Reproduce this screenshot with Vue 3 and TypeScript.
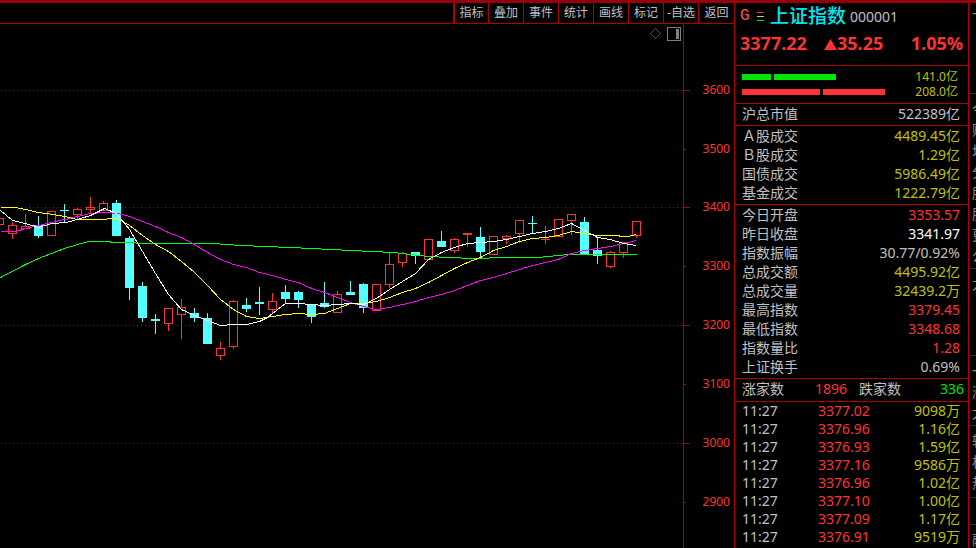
<script setup lang="ts">
type Tone = 'plain' | 'white' | 'red' | 'yellow' | 'green'

interface Stat {
  label: string
  value: string
  tone: Tone
}

interface Candle {
  x: number
  up: boolean
  high: number
  top: number
  bottom: number
  low: number
}

const tools: string[] = ['指标', '叠加', '事件', '统计', '画线', '标记', '-自选', '返回']

const axis = [
  { price: 3600, y: 90, major: true },
  { price: 3500, y: 149, major: false },
  { price: 3400, y: 207, major: true },
  { price: 3300, y: 266, major: false },
  { price: 3200, y: 325, major: true },
  { price: 3100, y: 384, major: false },
  { price: 3000, y: 443, major: true },
  { price: 2900, y: 502, major: false },
]
const gridLines = axis.filter((a) => a.major)

// direction (1 = close above open), high, body top, body bottom, low
const bars: number[][] = [
  [1, 218, 218, 225, 225],
  [1, 222, 225, 234, 239],
  [1, 214, 226, 229, 229],
  [0, 216, 225, 236, 238],
  [1, 211, 211, 236, 236],
  [0, 204, 210, 211, 222],
  [1, 208, 209, 215, 219],
  [1, 197, 207, 210, 214],
  [1, 201, 203, 211, 211],
  [0, 200, 203, 236, 236],
  [0, 236, 238, 288, 300],
  [0, 282, 286, 318, 322],
  [0, 314, 319, 321, 334],
  [1, 308, 308, 324, 331],
  [1, 299, 307, 315, 339],
  [0, 308, 313, 318, 322],
  [0, 313, 318, 344, 344],
  [1, 342, 348, 356, 360],
  [1, 300, 301, 347, 349],
  [0, 298, 305, 309, 312],
  [0, 287, 302, 304, 315],
  [1, 293, 301, 310, 314],
  [0, 285, 292, 299, 303],
  [0, 291, 292, 300, 308],
  [0, 304, 304, 317, 323],
  [0, 282, 303, 307, 308],
  [1, 291, 294, 313, 313],
  [0, 281, 292, 295, 295],
  [0, 283, 284, 308, 313],
  [1, 284, 284, 311, 311],
  [1, 253, 264, 285, 288],
  [1, 252, 253, 263, 267],
  [0, 252, 252, 256, 264],
  [1, 239, 239, 260, 260],
  [0, 231, 241, 247, 247],
  [1, 238, 239, 251, 253],
  [1, 233, 233, 235, 247],
  [0, 227, 237, 252, 258],
  [1, 236, 236, 255, 255],
  [1, 235, 236, 239, 244],
  [1, 220, 220, 234, 243],
  [0, 216, 223, 224, 233],
  [1, 226, 239, 240, 244],
  [1, 219, 219, 237, 237],
  [1, 214, 214, 221, 235],
  [0, 217, 222, 254, 254],
  [0, 237, 250, 256, 264],
  [1, 251, 252, 267, 268],
  [1, 242, 242, 253, 258],
  [1, 221, 221, 236, 238],
]
const candles: Candle[] = bars.map(([dir, high, top, bottom, low], i) => ({
  x: i * 13 - 1,
  up: dir === 1,
  high,
  top,
  bottom,
  low,
}))

const averages = [
  {
    name: 'ma60',
    points:
      '0,277 25,264 38,258 51,253 64,248 77,244 88,241 108,241 112,242 133,242 138,243 213,243 240,245 290,247 330,249 393,252 410,254 428,256 448,257 473,258 487,258 490,257 538,257 567,254 636,254',
  },
  {
    name: 'ma20',
    points:
      '0,231 15,231 25,228 38,225 51,222 64,219 77,216 90,213 104,212 118,213 129,216 142,221 155,226 168,232 181,237 194,244 207,252 220,259 233,264 246,267 259,272 272,275 285,279 298,282 311,288 324,292 337,297 350,302 363,306 376,309 389,307 402,304 415,301 428,297 441,294 454,290 467,285 480,280 493,277 506,273 519,269 532,265 545,262 558,259 571,253 584,250 597,248 610,246 623,243 636,240',
  },
  {
    name: 'ma10',
    points:
      '0,207 15,207 25,209 38,212 53,214 64,216 77,219 97,219 117,218 129,225 142,235 155,244 168,251 181,261 194,272 207,285 220,299 233,309 246,316 259,318 272,316 285,314 298,313 311,314 324,313 337,308 350,303 363,303 376,301 389,297 402,292 415,288 428,282 441,275 454,268 467,262 480,257 493,250 506,246 519,241 532,238 545,237 558,235 571,231 584,233 597,235 617,235 621,236 627,236 636,234',
  },
  {
    name: 'ma5',
    points:
      '0,210 12,220 25,223 38,227 51,223 66,222 80,218 90,215 104,208 116,213 129,229 142,251 155,273 168,294 181,309 194,315 207,320 220,325 233,324 246,324 259,321 267,317 272,313 285,303 298,303 311,304 324,305 337,304 350,303 363,304 376,298 389,289 402,281 415,273 428,259 441,252 454,247 467,243 480,242 493,241 506,239 519,236 532,233 545,231 558,228 571,223 584,230 597,237 610,239 623,243 636,245',
  },
]

const flows = [
  { side: 'buy', parts: [29, 62], amount: '141.0亿' },
  { side: 'sell', parts: [78, 62], amount: '208.0亿' },
]

const groups: Stat[][] = [
  [{ label: '沪总市值', value: '522389亿', tone: 'plain' }],
  [
    { label: 'Ａ股成交', value: '4489.45亿', tone: 'yellow' },
    { label: 'Ｂ股成交', value: '1.29亿', tone: 'yellow' },
    { label: '国债成交', value: '5986.49亿', tone: 'yellow' },
    { label: '基金成交', value: '1222.79亿', tone: 'yellow' },
  ],
  [
    { label: '今日开盘', value: '3353.57', tone: 'red' },
    { label: '昨日收盘', value: '3341.97', tone: 'white' },
    { label: '指数振幅', value: '30.77/0.92%', tone: 'plain' },
    { label: '总成交额', value: '4495.92亿', tone: 'yellow' },
    { label: '总成交量', value: '32439.2万', tone: 'yellow' },
    { label: '最高指数', value: '3379.45', tone: 'red' },
    { label: '最低指数', value: '3348.68', tone: 'red' },
    { label: '指数量比', value: '1.28', tone: 'red' },
    { label: '上证换手', value: '0.69%', tone: 'plain' },
  ],
]

const ticks: [string, string, string][] = [
  ['11:27', '3377.02', '9098万'],
  ['11:27', '3376.96', '1.16亿'],
  ['11:27', '3376.93', '1.59亿'],
  ['11:27', '3377.16', '9586万'],
  ['11:27', '3376.96', '1.02亿'],
  ['11:27', '3377.10', '1.00亿'],
  ['11:27', '3377.09', '1.17亿'],
  ['11:27', '3376.91', '9519万'],
]

const sideGroups: { name: string; rows: string[] }[] = [
  { name: 'first', rows: ['一'] },
  { name: 'main', rows: ['今', '财', '均', '分', '股', '股', '更', '公'] },
  { name: 'wide', rows: ['大'] },
  { name: 'news', rows: ['一', '涨', '大'] },
  { name: 'hot', rows: ['较', '板', '热'] },
  { name: 'gap', rows: [] },
  { name: 'last', rows: ['融'] },
]
</script>

<template>
  <div class="terminal">
    <main class="chart-area">
      <nav class="toolbar">
        <button v-for="tool in tools" :key="tool" type="button">{{ tool }}</button>
      </nav>
      <svg class="chart" viewBox="0 24 734 524" preserveAspectRatio="xMaxYMin meet">
        <g class="grid">
          <line v-for="g in gridLines" :key="g.price" x1="1" :y1="g.y + 0.5" x2="683" :y2="g.y + 0.5" />
        </g>
        <g shape-rendering="crispEdges">
          <g v-for="c in candles" :key="c.x" :class="c.up ? 'up' : 'down'">
            <template v-if="c.up">
              <rect v-if="c.top > c.high" class="solid" :x="c.x" :y="c.high" width="1" :height="c.top - c.high" />
              <rect v-if="c.low > c.bottom" class="solid" :x="c.x" :y="c.bottom" width="1" :height="c.low - c.bottom" />
              <rect v-if="c.bottom - c.top < 3" class="solid" :x="c.x - 4" :y="c.top" width="9" :height="c.bottom - c.top" />
              <rect v-else class="hollow" :x="c.x - 3.5" :y="c.top + 0.5" width="8" :height="c.bottom - c.top - 1" />
            </template>
            <template v-else>
              <rect class="solid" :x="c.x" :y="c.high" width="1" :height="c.low - c.high" />
              <rect class="solid" :x="c.x - 4" :y="c.top" width="9" :height="c.bottom - c.top" />
            </template>
          </g>
        </g>
        <g class="averages" shape-rendering="crispEdges" transform="translate(0.5 0.5)">
          <polyline v-for="m in averages" :key="m.name" :class="m.name" :points="m.points" />
        </g>
        <g class="axis">
          <line x1="683.5" y1="24" x2="683.5" y2="548" />
          <g v-for="a in axis" :key="a.price">
            <line x1="684" :y1="a.y + 0.5" :x2="a.major ? 689 : 686" :y2="a.y + 0.5" />
            <text x="730" :y="a.y + 4" text-anchor="end">{{ a.price }}</text>
          </g>
        </g>
        <g class="marks">
          <path d="M655.5 28.5l5 5-5 5-5-5z" stroke-dasharray="1 0.4" />
          <rect x="667.5" y="27.5" width="13" height="13" />
          <rect class="filled" x="676" y="29" width="3" height="10" />
        </g>
      </svg>
    </main>

    <aside class="quote">
      <header class="head">
        <div class="name-line">
          <span class="flag">G</span>
          <svg class="list-icon" viewBox="0 0 7 9" shape-rendering="crispEdges">
            <path d="M0 .5h7" stroke="#ff3232" />
            <path d="M0 4.5h7" stroke="#c0c0c0" />
            <path d="M0 8.5h7" stroke="#00e600" />
          </svg>
          <h1>上证指数</h1>
          <span class="code">000001</span>
        </div>
        <div class="price-line">
          <span>3377.22</span>
          <span class="change">
            <svg viewBox="0 0 13 11"><path d="M6.5 0L13 11H0z" fill="#ff3232" /></svg>35.25</span>
          <span class="percent">1.05%</span>
        </div>
      </header>

      <section class="flows">
        <div v-for="f in flows" :key="f.side" class="flow" :class="f.side">
          <i v-for="(w, i) in f.parts" :key="i" :style="{ width: w + 'px' }"></i>
          <span>{{ f.amount }}</span>
        </div>
      </section>

      <dl v-for="(group, i) in groups" :key="i" class="stats">
        <div v-for="s in group" :key="s.label">
          <dt>{{ s.label }}</dt>
          <dd :class="s.tone">{{ s.value }}</dd>
        </div>
      </dl>

      <section class="breadth">
        <p><span>涨家数</span><span class="red">1896</span></p>
        <p><span>跌家数</span><span class="green">336</span></p>
      </section>

      <table class="ticks">
        <tbody>
          <tr v-for="(t, i) in ticks" :key="i">
            <td>{{ t[0] }}</td>
            <td class="red">{{ t[1] }}</td>
            <td class="yellow">{{ t[2] }}</td>
          </tr>
        </tbody>
      </table>
    </aside>

    <aside class="side">
      <ul v-for="g in sideGroups" :key="g.name" :class="g.name">
        <li v-for="(r, i) in g.rows" :key="i">{{ r }}</li>
      </ul>
    </aside>
  </div>
</template>

<style>
body {
  margin: 0;
  background: #000;
}
</style>

<style scoped>
.terminal {
  --line: #b00000;
  display: grid;
  grid-template-columns: minmax(0, 1fr) 235px 7px;
  box-sizing: border-box;
  min-height: 100vh;
  border-top: 3px solid #960008;
  background: #000;
  color: #c0c0c0;
  font: 14px/19px "Noto Sans", "Noto Sans CJK SC", sans-serif;
}

.chart-area {
  display: flex;
  flex-direction: column;
  min-width: 0;
}

.toolbar {
  display: flex;
  justify-content: flex-end;
  height: 20px;
  border-bottom: 1px solid var(--line);
}

.toolbar button {
  width: 35px;
  padding: 0;
  border: 0;
  border-left: 1px solid var(--line);
  background: none;
  color: #c0c0c0;
  font: 12px/18px "Noto Sans", "Noto Sans CJK SC", sans-serif;
  white-space: nowrap;
}

.toolbar button:first-child {
  border-left-width: 2px;
}

.toolbar button:last-child {
  width: 36px;
}

.chart {
  display: block;
  flex: 1 1 0;
  width: 100%;
  min-height: 0;
}

.grid line {
  stroke: #a01414;
  stroke-dasharray: 1 3;
}

.solid {
  stroke: none;
}

.up .solid {
  fill: #ff3232;
}

.down .solid {
  fill: #54ffff;
}

.hollow {
  fill: none;
  stroke: #ff3232;
}

.averages polyline {
  fill: none;
  stroke-width: 1;
}

.ma5 {
  stroke: #fff;
}

.ma10 {
  stroke: #ff0;
}

.ma20 {
  stroke: #f0f;
}

.ma60 {
  stroke: #0f0;
}

.axis line {
  stroke: var(--line);
}

.axis text {
  fill: #ff3232;
  font-size: 12px;
}

.marks path,
.marks rect {
  fill: none;
  stroke: #808080;
}

.marks .filled {
  fill: #808080;
  stroke: none;
}

.quote {
  border: solid var(--line);
  border-width: 0 1px;
}

.head {
  height: 62px;
  box-sizing: border-box;
  padding: 0 5px;
}

.name-line {
  display: flex;
  align-items: center;
  height: 26px;
}

.flag {
  width: 17px;
  color: #ff5050;
  font: 16px/19px "Liberation Mono", monospace;
}

.list-icon {
  width: 7px;
  height: 9px;
  margin-right: 6px;
}

h1 {
  margin: 0 4px 0 0;
  color: #00e6f0;
  font-size: 19px;
  font-weight: 500;
  line-height: 26px;
}

.price-line {
  display: grid;
  grid-template-columns: 84px 1fr auto;
  align-items: center;
  height: 28px;
  color: #ff3232;
  font-size: 18px;
  font-weight: 700;
}

.change svg {
  width: 13px;
  height: 11px;
}

.flows {
  padding: 3px 10px 4px 7px;
  border-top: 1px solid var(--line);
}

.flow {
  display: flex;
  align-items: center;
  gap: 3px;
  height: 15px;
  font-size: 12px;
  line-height: 15px;
}

.flow i {
  height: 6px;
}

.buy i {
  background: #00e600;
}

.sell i {
  background: #ff3232;
}

.flow span {
  margin-left: auto;
  color: #c0c000;
}

.stats {
  margin: 0;
  padding: 0 8px 2px 7px;
  border-top: 1px solid var(--line);
}

.stats div {
  display: flex;
  justify-content: space-between;
  height: 19px;
}

.stats dd {
  margin: 0;
}

.white {
  color: #fff;
}

.red {
  color: #ff3232;
}

.yellow {
  color: #c0c000;
}

.green {
  color: #00e600;
}

.breadth {
  display: grid;
  grid-template-columns: 1fr 1fr;
  gap: 12px;
  padding: 0 4px 3px 7px;
  border: solid var(--line);
  border-width: 1px 0;
}

.breadth p {
  display: flex;
  justify-content: space-between;
  margin: 0;
}

.ticks {
  width: 100%;
  padding: 0 8px 0 7px;
  border-spacing: 0;
  line-height: 18px;
}

.ticks td {
  height: 18px;
  padding: 0;
}

.ticks td:first-child {
  width: 76px;
}

.ticks td:last-child {
  text-align: right;
}

.side {
  overflow: hidden;
  color: #8c8c8c;
}

.side ul {
  box-sizing: border-box;
  margin: 0;
  padding: 4px 0 0 3px;
  border-top: 1px solid #303030;
  list-style: none;
}

.side li {
  width: 14px;
  height: 21px;
  line-height: 21px;
}

.side .first {
  height: 90px;
  padding-top: 0;
  border-top: 0;
}

.side .main {
  height: 175px;
}

.side .wide {
  height: 87px;
}

.side .news {
  height: 70px;
}

.side .hot {
  height: 72px;
}

.side .gap {
  height: 27px;
}

.side .last {
  height: 24px;
  overflow: hidden;
}
</style>
